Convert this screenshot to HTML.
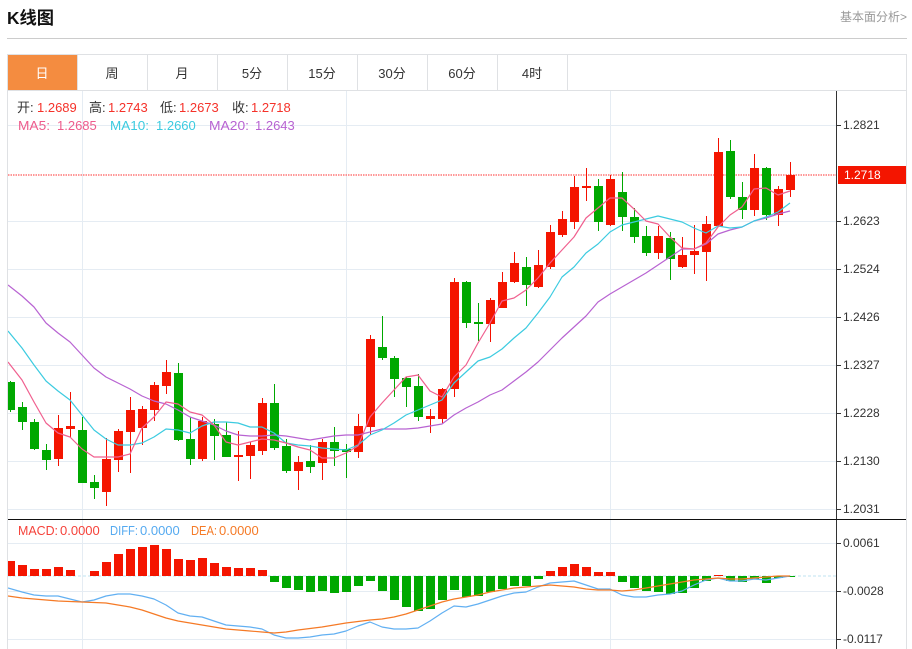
<!DOCTYPE html>
<html lang="zh">
<head>
<meta charset="utf-8">
<title>K线图</title>
<style>
html,body{margin:0;padding:0;background:#fff;width:912px;height:649px;overflow:hidden}
svg{display:block;font-family:"Liberation Sans","Noto Sans CJK SC",sans-serif}
.c{shape-rendering:crispEdges}
.ma{fill:none;stroke-width:1.2;stroke-linejoin:round}
.ax{font-size:12px;fill:#333}
.tab{font-size:13px;fill:#333;text-anchor:middle}
</style>
</head>
<body>
<svg width="912" height="649" viewBox="0 0 912 649" xmlns="http://www.w3.org/2000/svg">
<defs><clipPath id="cp"><rect x="8" y="91" width="828" height="558"/></clipPath></defs>

<text x="7" y="24" font-size="17.5" font-weight="700" fill="#111" textLength="47" lengthAdjust="spacingAndGlyphs">K线图</text>
<text x="840" y="21" font-size="12" fill="#999">基本面分析&gt;</text>
<path class="c" d="M7 38.5H907" stroke="#ccc"/>

<!-- frame & tabs -->
<path class="c" fill="none" stroke="#dfe1e4" d="M7.5 649V54.5H906.5V649M7.5 90.5H906.5M77.5 55V90M147.5 55V90M217.5 55V90M287.5 55V90M357.5 55V90M427.5 55V90M497.5 55V90M567.5 55V90"/>
<rect class="c" x="8" y="55" width="69" height="35" fill="#f48c40"/>
<text class="tab" x="42" y="78" style="fill:#fff">日</text>
<text class="tab" x="112" y="78">周</text>
<text class="tab" x="182" y="78">月</text>
<text class="tab" x="252" y="78">5分</text>
<text class="tab" x="322" y="78">15分</text>
<text class="tab" x="392" y="78">30分</text>
<text class="tab" x="462" y="78">60分</text>
<text class="tab" x="532" y="78">4时</text>

<!-- grid -->
<path class="c" fill="none" stroke="#e5ecf3" d="M8 125.5H836M8 221.5H836M8 269.5H836M8 317.5H836M8 365.5H836M8 413.5H836M8 461.5H836M8 509.5H836M8 543.5H836M8 591.5H836M8 639.5H836M82.5 91V649M346.5 91V649M610.5 91V649"/>

<g clip-path="url(#cp)">
<!-- price line -->
<path d="M8 175H836" stroke="#f77" stroke-width="1.6" stroke-dasharray="1.5 1" fill="none"/>

<!-- green wicks -->
<path class="c" stroke="#00a800" fill="none" d="M10.5 381V412M22.5 402V430M34.5 419V450M46.5 444V470M82.5 417V483M94.5 475V499M178.5 363V441M190.5 417V465M214.5 419V460M226.5 422V457M274.5 384V450M286.5 439V473M310.5 445V473M334.5 427V466M346.5 444V478M382.5 316V360M394.5 356V397M406.5 377V407M418.5 374V421M466.5 281V328M478.5 303V341M526.5 257V306M598.5 179V231M622.5 172V231M634.5 208V243M646.5 226V256M670.5 232V280M730.5 140V199M742.5 182V219M766.5 167V220"/>
<!-- green bodies -->
<path class="c" fill="#00a800" d="M6 382h9v28h-9zM18 407h9v15h-9zM30 422h9v27h-9zM42 450h9v10h-9zM78 430h9v53h-9zM90 482h9v6h-9zM174 373h9v67h-9zM186 439h9v20h-9zM210 424h9v12h-9zM222 435h9v22h-9zM270 403h9v45h-9zM282 446h9v25h-9zM306 461h9v6h-9zM330 442h9v9h-9zM342 449h9v3h-9zM378 347h9v11h-9zM390 358h9v21h-9zM402 378h9v9h-9zM414 386h9v31h-9zM462 282h9v41h-9zM474 322h9v2h-9zM522 267h9v18h-9zM594 186h9v36h-9zM618 192h9v25h-9zM630 217h9v20h-9zM642 236h9v17h-9zM666 238h9v21h-9zM726 151h9v46h-9zM738 197h9v13h-9zM762 168h9v47h-9z"/>

<!-- red wicks -->
<path class="c" stroke="#f40f00" fill="none" d="M58.5 415V466M70.5 392V437M106.5 438V506M118.5 429V472M130.5 397V473M142.5 406V445M154.5 382V421M166.5 360V394M202.5 417V461M238.5 431V481M250.5 442V479M262.5 398V455M298.5 456V490M322.5 439V480M358.5 414V458M370.5 335V435M430.5 409V433M442.5 388V423M454.5 278V397M490.5 298V342M502.5 272V308M514.5 252V283M538.5 250V288M550.5 225V269M562.5 211V237M574.5 176V229M586.5 168V201M610.5 175V226M658.5 226V259M682.5 237V268M694.5 225V274M706.5 216V281M718.5 138V227M754.5 154V216M778.5 186V226M790.5 162V197"/>
<!-- red bodies -->
<path class="c" fill="#f41500" d="M54 428h9v31h-9zM66 426h9v3h-9zM102 459h9v33h-9zM114 431h9v29h-9zM126 410h9v22h-9zM138 409h9v19h-9zM150 385h9v25h-9zM162 372h9v14h-9zM198 421h9v38h-9zM234 455h9v2h-9zM246 445h9v11h-9zM258 403h9v48h-9zM294 462h9v9h-9zM318 442h9v21h-9zM354 426h9v26h-9zM366 339h9v88h-9zM426 416h9v3h-9zM438 389h9v30h-9zM450 282h9v107h-9zM486 300h9v24h-9zM498 282h9v26h-9zM510 263h9v19h-9zM534 265h9v22h-9zM546 232h9v35h-9zM558 219h9v16h-9zM570 187h9v35h-9zM582 186h9v2h-9zM606 179h9v46h-9zM654 236h9v17h-9zM678 255h9v12h-9zM690 251h9v4h-9zM702 224h9v28h-9zM714 152h9v74h-9zM750 168h9v42h-9zM774 189h9v26h-9zM786 175h9v15h-9z"/>

<!-- MA20 -->
<polyline class="ma" stroke="#b863d2" points="8,285 22,296 34,307 46,323 58,333 70,342 82,355 94,368 106,377 118,383 130,389 142,396 154,401 166,404 178,410 190,417 202,421 214,425 226,431 238,435 250,436 262,436 274,435 286,436 298,438 310,440 322,438 334,436 346,435 358,435 370,432 382,429 394,429 406,429 418,428 430,426 442,424 454,415 466,408 478,402 490,395 502,390 514,381 526,372 538,362 550,350 562,338 574,327 586,316 598,302 610,294 622,287 634,280 646,273 658,265 670,257 682,249 694,249 706,244 718,234 730,230 742,227 754,221 766,218 778,214 790,211"/>
<!-- MA10 -->
<polyline class="ma" stroke="#3ccbe0" points="8,331 22,348 34,365 46,381 58,391 70,400 82,415 94,430 106,439 118,445 130,445 142,443 154,437 166,429 178,430 190,433 202,426 214,422 226,422 238,423 250,427 262,427 274,433 286,443 298,445 310,446 322,448 334,449 346,450 358,445 370,435 382,430 394,423 406,415 418,410 430,405 442,400 454,383 466,372 478,361 490,357 502,349 514,338 526,328 538,313 550,297 562,277 574,267 586,253 598,244 610,232 622,225 634,222 646,219 658,216 670,219 682,222 694,228 706,233 718,226 730,228 742,227 754,221 766,217 778,212 790,203"/>
<!-- MA5 -->
<polyline class="ma" stroke="#f0608f" points="8,362 22,380 34,402 46,423 58,433 70,437 82,449 94,457 106,457 118,457 130,454 142,428 154,417 166,402 178,404 190,412 202,415 214,425 226,442 238,445 250,442 262,439 274,440 286,443 298,447 310,450 322,458 334,458 346,453 358,446 370,417 382,403 394,390 406,377 418,375 430,391 442,397 454,377 466,365 478,343 490,323 502,301 514,298 526,290 538,278 550,263 562,250 574,237 586,218 598,208 610,198 622,198 634,209 646,221 658,224 670,237 682,248 694,249 706,243 718,227 730,215 742,207 754,189 766,188 778,195 790,191"/>

<!-- MACD bars -->
<path d="M8 576H836" stroke="#bfe3f0" stroke-width="1" stroke-dasharray="3 2" fill="none"/>
<path class="c" fill="#f41500" d="M6 561h9v15h-9zM18 565h9v11h-9zM30 569h9v7h-9zM42 569h9v7h-9zM54 567h9v9h-9zM66 570h9v6h-9zM90 571h9v5h-9zM102 562h9v14h-9zM114 554h9v22h-9zM126 549h9v27h-9zM138 547h9v29h-9zM150 545h9v31h-9zM162 549h9v27h-9zM174 559h9v17h-9zM186 560h9v16h-9zM198 558h9v18h-9zM210 563h9v13h-9zM222 567h9v9h-9zM234 568h9v8h-9zM246 568h9v8h-9zM258 570h9v6h-9zM546 571h9v5h-9zM558 567h9v9h-9zM570 564h9v12h-9zM582 567h9v9h-9zM594 572h9v4h-9zM606 572h9v4h-9zM714 575h9v1h-9z"/>
<path class="c" fill="#00a800" d="M270 576h9v6h-9zM282 576h9v12h-9zM294 576h9v14h-9zM306 576h9v16h-9zM318 576h9v15h-9zM330 576h9v17h-9zM342 576h9v16h-9zM354 576h9v10h-9zM366 576h9v5h-9zM378 576h9v15h-9zM390 576h9v24h-9zM402 576h9v31h-9zM414 576h9v35h-9zM426 576h9v33h-9zM438 576h9v24h-9zM450 576h9v14h-9zM462 576h9v21h-9zM474 576h9v20h-9zM486 576h9v16h-9zM498 576h9v13h-9zM510 576h9v10h-9zM522 576h9v10h-9zM534 576h9v3h-9zM618 576h9v6h-9zM630 576h9v12h-9zM642 576h9v15h-9zM654 576h9v16h-9zM666 576h9v18h-9zM678 576h9v17h-9zM690 576h9v12h-9zM702 576h9v5h-9zM726 576h9v5h-9zM738 576h9v6h-9zM750 576h9v3h-9zM762 576h9v7h-9zM774 576h9v2h-9zM786 576h9v1h-9z"/>
<!-- DIFF -->
<polyline class="ma" stroke="#62b0f2" points="8,588 22,592 34,595 46,596 58,596 70,599 82,602 94,600 106,596 118,594 130,594 142,596 154,599 166,605 178,613 190,616 202,617 214,621 226,625 238,626 250,627 262,629 274,635 286,638 298,638 310,637 322,635 334,634 346,631 358,626 370,622 382,627 394,629 406,629 418,628 430,621 442,613 454,606 466,607 478,604 490,600 502,596 514,593 526,592 538,587 550,583 562,582 574,581 586,585 598,589 610,589 622,595 634,597 646,597 658,595 670,594 682,591 694,585 706,580 718,578 730,581 742,581 754,579 766,580 778,578 790,576"/>
<!-- DEA -->
<polyline class="ma" stroke="#f57a26" points="8,596 22,598 34,599 58,601 82,602 106,603 118,605 130,607 142,610 154,614 166,618 178,621 190,623 202,625 214,627 226,629 238,630 250,631 262,632 274,633 286,632 298,630 322,627 346,623 370,620 382,619 394,617 406,614 418,610 430,606 442,602 454,599 466,597 478,595 490,592 502,590 514,588 526,587 538,586 550,585 562,586 574,587 586,589 598,590 610,590 622,591 634,590 646,588 658,586 670,584 682,582 694,580 706,579 718,578 730,579 742,579 754,578 766,577 778,576 790,576"/>
</g>

<!-- axes -->
<path class="c" fill="none" stroke="#333" d="M836.5 91V649M837 125.5H841M837 221.5H841M837 269.5H841M837 317.5H841M837 365.5H841M837 413.5H841M837 461.5H841M837 509.5H841M837 543.5H841M837 591.5H841M837 639.5H841"/>
<path class="c" fill="none" stroke="#111" d="M8 519.5H906"/>
<text class="ax" x="843" y="129">1.2821</text>
<text class="ax" x="843" y="225">1.2623</text>
<text class="ax" x="843" y="273">1.2524</text>
<text class="ax" x="843" y="321">1.2426</text>
<text class="ax" x="843" y="369">1.2327</text>
<text class="ax" x="843" y="417">1.2228</text>
<text class="ax" x="843" y="465">1.2130</text>
<text class="ax" x="843" y="513">1.2031</text>
<text class="ax" x="843" y="547">0.0061</text>
<text class="ax" x="843" y="595">-0.0028</text>
<text class="ax" x="843" y="643">-0.0117</text>
<rect class="c" x="838" y="166" width="68" height="18" fill="#f41500"/>
<text x="844" y="179" font-size="12" fill="#fff">1.2718</text>

<!-- legends -->
<g font-size="13">
<text x="17" y="112" fill="#333">开:</text><text x="37" y="112" fill="#f5322a">1.2689</text>
<text x="89" y="112" fill="#333">高:</text><text x="108" y="112" fill="#f5322a">1.2743</text>
<text x="160" y="112" fill="#333">低:</text><text x="179" y="112" fill="#f5322a">1.2673</text>
<text x="232" y="112" fill="#333">收:</text><text x="251" y="112" fill="#f5322a">1.2718</text>
<text x="18" y="130" fill="#ee5c8c" textLength="32" lengthAdjust="spacingAndGlyphs">MA5:</text><text x="57" y="130" fill="#ee5c8c">1.2685</text>
<text x="110" y="130" fill="#3ccbe0" textLength="39" lengthAdjust="spacingAndGlyphs">MA10:</text><text x="156" y="130" fill="#3ccbe0">1.2660</text>
<text x="209" y="130" fill="#b863d2" textLength="40" lengthAdjust="spacingAndGlyphs">MA20:</text><text x="255" y="130" fill="#b863d2">1.2643</text>
<text x="18" y="535" fill="#f5423a" textLength="40" lengthAdjust="spacingAndGlyphs">MACD:</text><text x="60" y="535" fill="#f5423a">0.0000</text>
<text x="110" y="535" fill="#55aaf0" textLength="28" lengthAdjust="spacingAndGlyphs">DIFF:</text><text x="140" y="535" fill="#55aaf0">0.0000</text>
<text x="191" y="535" fill="#f57a26" textLength="26" lengthAdjust="spacingAndGlyphs">DEA:</text><text x="219" y="535" fill="#f57a26">0.0000</text>
</g>
</svg>
</body>
</html>
